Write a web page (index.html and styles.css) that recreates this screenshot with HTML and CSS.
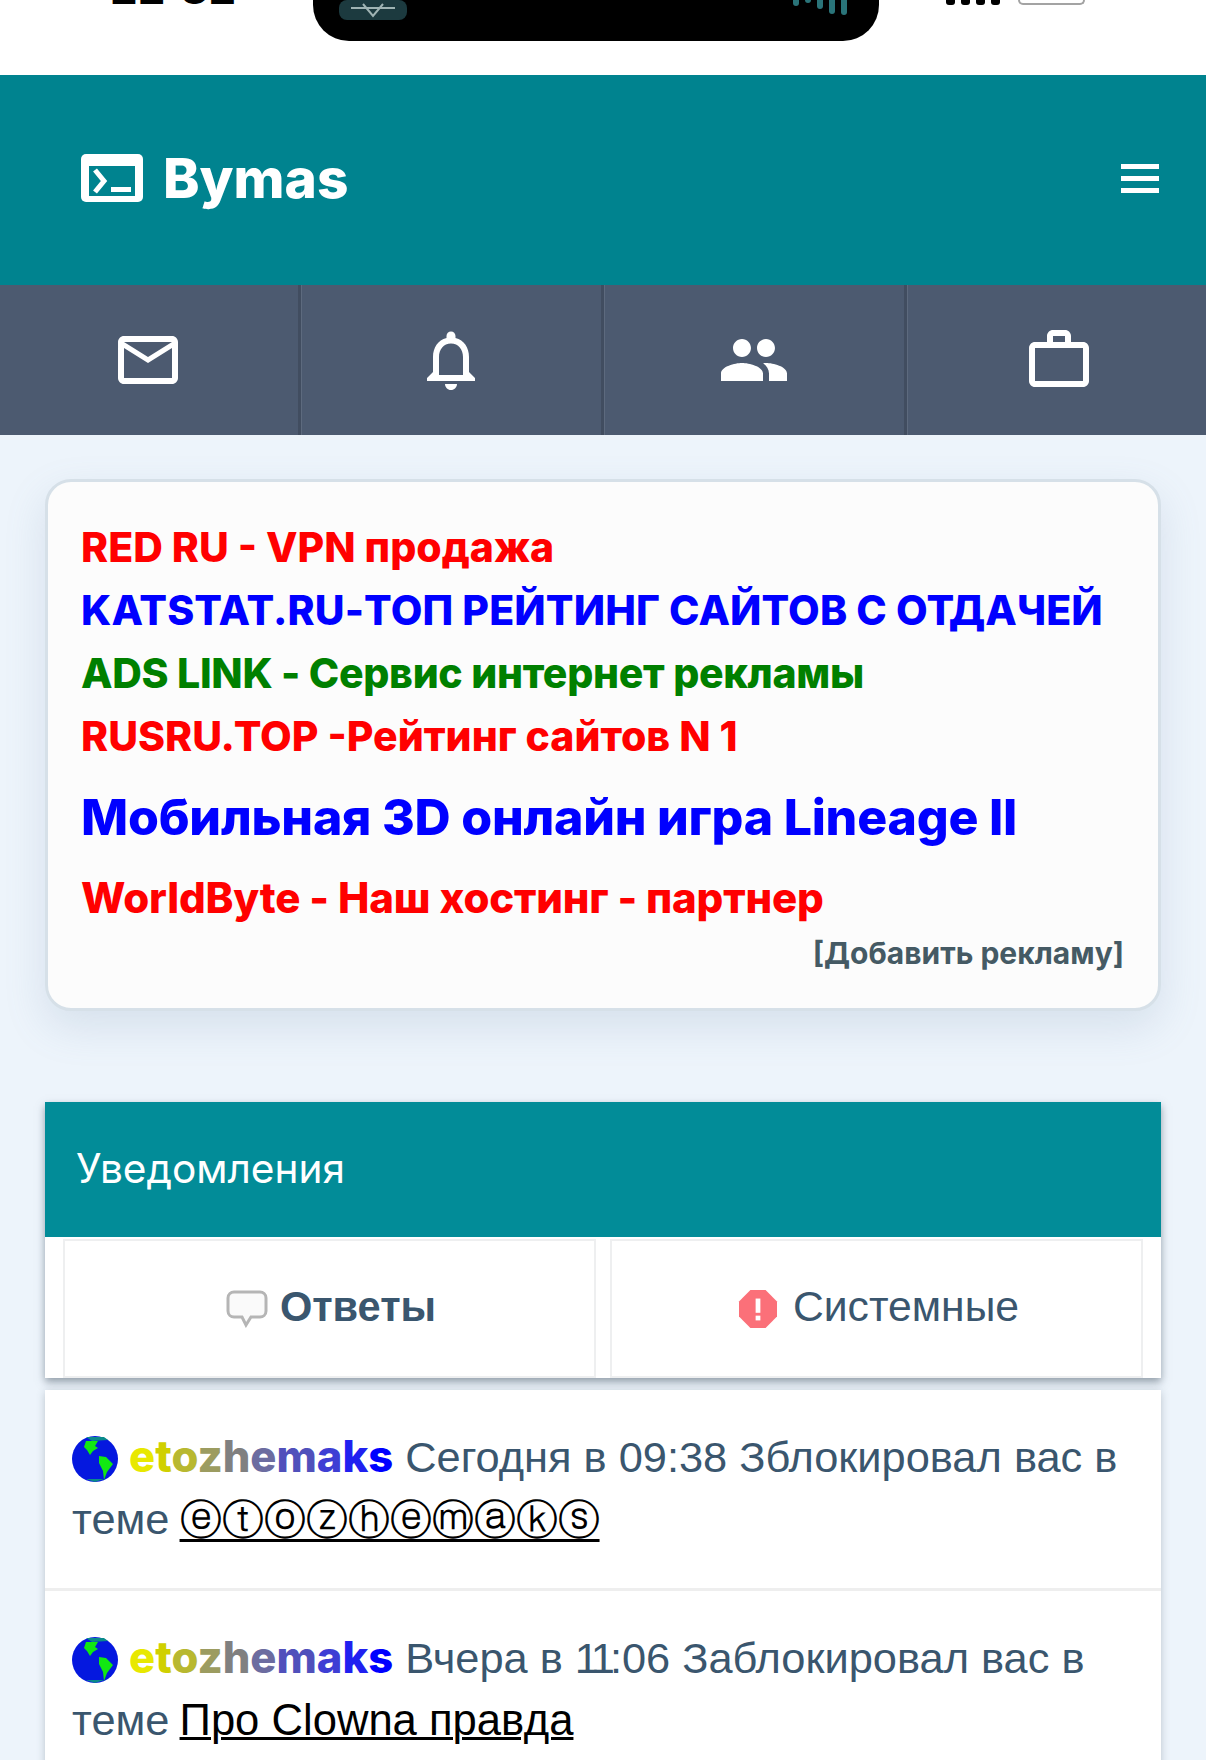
FILE: index.html
```html
<!DOCTYPE html>
<html lang="ru">
<head>
  <meta charset="UTF-8">
  <meta name="viewport" content="width=device-width, initial-scale=1.0">
  <title>Bymas - Уведомления</title>
  <link rel="stylesheet" href="styles.css">
</head>
<body>
  <div class="status-bar">
    <span class="status-time">22:32</span>
    <div class="notch">
      <svg class="notch-thumb" viewBox="0 0 68 20" aria-hidden="true">
        <rect width="68" height="20" rx="8" fill="#1c3a3f"/>
        <path d="M12 8h44M24 4l10 12 10-12" stroke="#9fb3b3" stroke-width="2" fill="none"/>
      </svg>
      <div class="notch-wave">
        <i class="bar-a"></i><i class="bar-b"></i><i class="bar-c"></i><i class="bar-d"></i><i class="bar-e"></i>
      </div>
    </div>
    <div class="status-right">
      <div class="signal"><i></i><i></i><i></i><i></i></div>
      <div class="battery"></div>
    </div>
  </div>

  <header class="topbar">
    <a class="logo" href="#">
      <svg class="logo-icon" viewBox="0 0 62 48" aria-hidden="true">
        <rect width="62" height="48" rx="5" fill="#fff"/>
        <rect x="8" y="12" width="46" height="30" fill="#00838f"/>
        <path d="M14 16l9 11-9 11" fill="none" stroke="#fff" stroke-width="5"/>
        <rect x="30" y="33" width="20" height="5" fill="#fff"/>
      </svg>
      <span>Bymas</span>
    </a>
    <div class="burger"><i></i><i></i><i></i></div>
  </header>

  <nav class="iconbar">
    <a href="#">
      <svg viewBox="0 0 24 24"><path d="M20 4H4c-1.1 0-1.99.9-1.99 2L2 18c0 1.1.9 2 2 2h16c1.1 0 2-.9 2-2V6c0-1.1-.9-2-2-2zm0 14H4V8l8 5 8-5v10zm-8-7L4 6h16l-8 5z"/></svg>
    </a>
    <a href="#">
      <svg viewBox="0 0 24 24"><path d="M12 22c1.1 0 2-.9 2-2h-4c0 1.1.9 2 2 2zm6-6v-5c0-3.07-1.63-5.64-4.5-6.32V4c0-.83-.67-1.5-1.5-1.5s-1.5.67-1.5 1.5v.68C7.64 5.36 6 7.92 6 11v5l-2 2v1h16v-1l-2-2zm-2 1H8v-6c0-2.48 1.51-4.5 4-4.5s4 2.02 4 4.5v6z"/></svg>
    </a>
    <a href="#">
      <svg viewBox="0 0 24 24"><path d="M16 11c1.66 0 2.99-1.34 2.99-3S17.66 5 16 5c-1.66 0-3 1.34-3 3s1.34 3 3 3zm-8 0c1.66 0 2.99-1.34 2.99-3S9.66 5 8 5C6.34 5 5 6.34 5 8s1.34 3 3 3zm0 2c-2.33 0-7 1.17-7 3.5V19h14v-2.5c0-2.33-4.67-3.5-7-3.5zm8 0c-.29 0-.62.02-.97.05 1.16.84 1.97 1.97 1.97 3.45V19h6v-2.5c0-2.33-4.67-3.5-7-3.5z"/></svg>
    </a>
    <a href="#">
      <svg viewBox="0 0 24 24"><path d="M14 6V4h-4v2h4zM4 8v11h16V8H4zm16-2c1.11 0 2 .89 2 2v11c0 1.11-.89 2-2 2H4c-1.11 0-2-.89-2-2l.01-11c0-1.11.88-2 1.99-2h4V4c0-1.11.89-2 2-2h4c1.11 0 2 .89 2 2v2h4z"/></svg>
    </a>
  </nav>

  <main class="content">
    <section class="ads">
      <a class="ad red" href="#">RED RU - VPN продажа</a>
      <a class="ad ad-wide blue" href="#">KATSTAT.RU-ТОП РЕЙТИНГ САЙТОВ С ОТДАЧЕЙ</a>
      <a class="ad ad-tight green" href="#">ADS LINK - Сервис интернет рекламы</a>
      <a class="ad red" href="#">RUSRU.TOP -Рейтинг сайтов N 1</a>
      <a class="ad ad-big blue" href="#">Мобильная 3D онлайн игра Lineage II</a>
      <a class="ad ad-mid red" href="#">WorldByte - Наш хостинг - партнер</a>
      <div class="ad-add"><a href="#">[Добавить рекламу]</a></div>
    </section>

    <section class="panel">
      <h2 class="panel-head">Уведомления</h2>
      <div class="tabs">
        <a class="tab tab-active" href="#">
          <svg class="tab-icon" viewBox="0 0 42 38" aria-hidden="true">
            <path d="M8 2h26c3 0 6 2 6 6v13c0 4-3 6-6 6H25l-5 8-4-8H8c-3 0-6-2-6-6V8c0-4 3-6 6-6z" fill="#fafafa" stroke="#b5b5b5" stroke-width="3"/>
          </svg>
          Ответы
        </a>
        <a class="tab" href="#">
          <svg class="tab-icon" viewBox="0 0 40 40" aria-hidden="true">
            <path d="M12 0h16l12 12v16L28 40H12L0 28V12z" fill="#fb7079"/>
            <rect x="17.5" y="9" width="5" height="15" fill="#fff"/>
            <rect x="17.5" y="27" width="5" height="5" fill="#fff"/>
          </svg>
          Системные
        </a>
      </div>
    </section>

    <section class="notices">
      <article class="notice">
        <svg class="globe" viewBox="0 0 46 46" aria-hidden="true">
          <circle cx="23" cy="23" r="23" fill="#0518df"/>
          <path d="M14 1h18l4 3-16 1z" fill="#0a8a8a"/>
          <path d="M14 5h12l-3 5 3 2-5 3-3 4-3-5-3-3z" fill="#12e812"/>
          <path d="M27 20l7 1 7 7-6 8-3 8-1-9-4-8z" fill="#12e812"/>
          <path d="M14 43h18l-9 3z" fill="#0a8a8a"/>
        </svg>
        <a class="nick" href="#"><b class="c1">e</b><b class="c2">t</b><b class="c3">o</b><b class="c4">z</b><b class="c5">h</b><b class="c6">e</b><b class="c7">m</b><b class="c8">a</b><b class="c9">k</b><b class="c10">s</b></a>
        Сегодня в 09:38 Зблокировал вас в теме <a class="topic topic-circled" href="#">ⓔⓣⓞⓩⓗⓔⓜⓐⓚⓢ</a>
      </article>
      <article class="notice">
        <svg class="globe" viewBox="0 0 46 46" aria-hidden="true">
          <circle cx="23" cy="23" r="23" fill="#0518df"/>
          <path d="M14 1h18l4 3-16 1z" fill="#0a8a8a"/>
          <path d="M14 5h12l-3 5 3 2-5 3-3 4-3-5-3-3z" fill="#12e812"/>
          <path d="M27 20l7 1 7 7-6 8-3 8-1-9-4-8z" fill="#12e812"/>
          <path d="M14 43h18l-9 3z" fill="#0a8a8a"/>
        </svg>
        <a class="nick" href="#"><b class="c1">e</b><b class="c2">t</b><b class="c3">o</b><b class="c4">z</b><b class="c5">h</b><b class="c6">e</b><b class="c7">m</b><b class="c8">a</b><b class="c9">k</b><b class="c10">s</b></a>
        Вчера в <span class="ones">11</span>:06 Заблокировал вас в теме <a class="topic" href="#">Про Clowna правда</a>
      </article>
    </section>
  </main>
</body>
</html>
```

FILE: styles.css
```css
* {
  box-sizing: border-box;
}

html, body {
  height: 100%;
  overflow: hidden;
}

body {
  margin: 0;
  background-color: #edf4fb;
  color: #3a566e;
  font-family: 'Liberation Sans', Arial, sans-serif;
}

a {
  color: inherit;
  text-decoration: none;
}

/* phone status bar, cut off at the top of the shot */
.status-bar {
  height: 75px;
  background-color: #fff;
  display: flex;
  justify-content: space-between;
  align-items: flex-start;
  overflow: hidden;
}

.status-time {
  margin: -34px 0 0 110px;
  font: 700 44px/44px 'Inter', sans-serif;
  color: #000;
}

.notch {
  width: 566px;
  height: 41px;
  margin-left: 9px;
  background-color: #000;
  border-radius: 0 0 36px 36px;
  display: flex;
  justify-content: space-between;
  padding: 0 32px 0 26px;
}

.notch-thumb {
  width: 68px;
  height: 20px;
}

.notch-wave {
  display: flex;
  gap: 6px;
}

.notch-wave i {
  width: 6px;
  background-color: #2a7479;
  border-radius: 0 0 3px 3px;
}

.bar-a { height: 6px; }
.bar-b { height: 3px; }
.bar-c { height: 9px; }
.bar-d { height: 14px; }
.bar-e { height: 15px; }

.status-right {
  display: flex;
  gap: 18px;
  margin-right: 121px;
}

.signal {
  display: flex;
  gap: 6px;
}

.signal i {
  width: 9px;
  height: 5px;
  background-color: #000;
  border-radius: 0 0 3px 3px;
}

.battery {
  width: 67px;
  height: 5px;
  border: 2px solid #a3a3a3;
  border-top: 0;
  border-radius: 0 0 8px 8px;
}

.topbar {
  height: 210px;
  background-color: #00838f;
  display: flex;
  justify-content: space-between;
  align-items: center;
  padding: 0 47px 0 81px;
}

.logo {
  display: flex;
  align-items: center;
  gap: 20px;
  color: #fff;
  font: 800 55px/60px 'Inter', sans-serif;
  margin-top: -4px;
}

.logo-icon {
  width: 62px;
  height: 48px;
}

.burger {
  width: 38px;
  display: flex;
  flex-direction: column;
  gap: 7px;
  margin-top: -4px;
}

.burger i {
  height: 5px;
  background-color: #fff;
}

.iconbar {
  height: 150px;
  background-color: #4c5a70;
  display: grid;
  grid-template-columns: repeat(4, 303px);
  margin-left: -2px;
  overflow: hidden;
}

.iconbar a {
  display: flex;
  align-items: center;
  justify-content: center;
  border-right: 3px solid #414d60;
  box-shadow: 1px 0 0 #5d6a7e;
}

.iconbar a:last-child {
  border-right: 0;
}

.iconbar svg {
  width: 72px;
  height: 72px;
  fill: #fff;
}

.content {
  padding: 44px 45px 0;
}

.ads {
  background-color: #fcfcfc;
  border: 3px solid #d6e0e8;
  border-radius: 26px;
  padding: 34px 34px 0 33px;
  height: 532px;
  box-shadow: 0 16px 40px rgba(110, 140, 170, 0.18);
}

.ad {
  display: block;
  font: 800 41px/63px 'Inter', sans-serif;
  white-space: nowrap;
}

.ad-wide {
  letter-spacing: 0.11px;
}

.ad-tight {
  letter-spacing: -0.3px;
}

.ad-big {
  font-size: 50px;
  line-height: 98px;
  letter-spacing: -0.22px;
}

.ad-mid {
  font-size: 42px;
  line-height: 64px;
  letter-spacing: -0.17px;
}

.red { color: #f00; }
.blue { color: #00f; }
.green { color: #008000; }

.ad-add {
  text-align: right;
  font: 700 30px/46px 'Inter', sans-serif;
  color: #455a64;
}

.panel {
  margin-top: 91px;
  background-color: #fff;
  box-shadow: 0 4px 8px rgba(70, 85, 100, 0.55);
}

.panel-head {
  margin: 0;
  height: 135px;
  background-color: #028c98;
  color: #fff;
  font: 400 40.6px/134px 'Inter', sans-serif;
  padding-left: 31px;
}

.tabs {
  display: grid;
  grid-template-columns: 1fr 1fr;
  gap: 14px;
  height: 141px;
  padding: 2px 18px 0;
}

.tab {
  display: flex;
  align-items: center;
  justify-content: center;
  gap: 14px;
  border: 2px solid #eeeff0;
  font-size: 42.7px;
  padding: 0 0 4px 3px;
}

.tab-active {
  gap: 12px;
  font-size: 41.6px;
  font-weight: 700;
}

.tab-icon {
  width: 42px;
  height: 38px;
  margin-top: 4px;
}

.notices {
  margin-top: 12px;
  background-color: #fff;
  box-shadow: 0 2px 8px rgba(70, 85, 100, 0.3);
}

.notice {
  padding: 35px 27px 37px;
  font-size: 43.4px;
  line-height: 62px;
  border-bottom: 3px solid #eee;
}

/* the 1s sit tighter in the reference */
.ones {
  letter-spacing: -5px;
}

.globe {
  width: 46px;
  height: 46px;
  vertical-align: -10px;
}

.nick {
  font-family: 'Inter', sans-serif;
  font-size: 43.5px;
  margin-left: -1px;
}

.nick b {
  font-weight: 800;
}

.c1 { color: #e8e800; }
.c2 { color: #d0d000; }
.c3 { color: #b8b830; }
.c4 { color: #9c9c60; }
.c5 { color: #808080; }
.c6 { color: #6c6ca0; }
.c7 { color: #5050bb; }
.c8 { color: #3e3ed4; }
.c9 { color: #2020f0; }
.c10 { color: #00f; }

.topic {
  color: #000;
  margin-left: -2px;
  font-size: 43.6px;
  text-decoration: underline;
  text-decoration-thickness: 3px;
}

.topic-circled {
  font-family: 'DejaVu Sans', sans-serif;
  font-size: 42px;
  text-underline-offset: 5px;
}
```
